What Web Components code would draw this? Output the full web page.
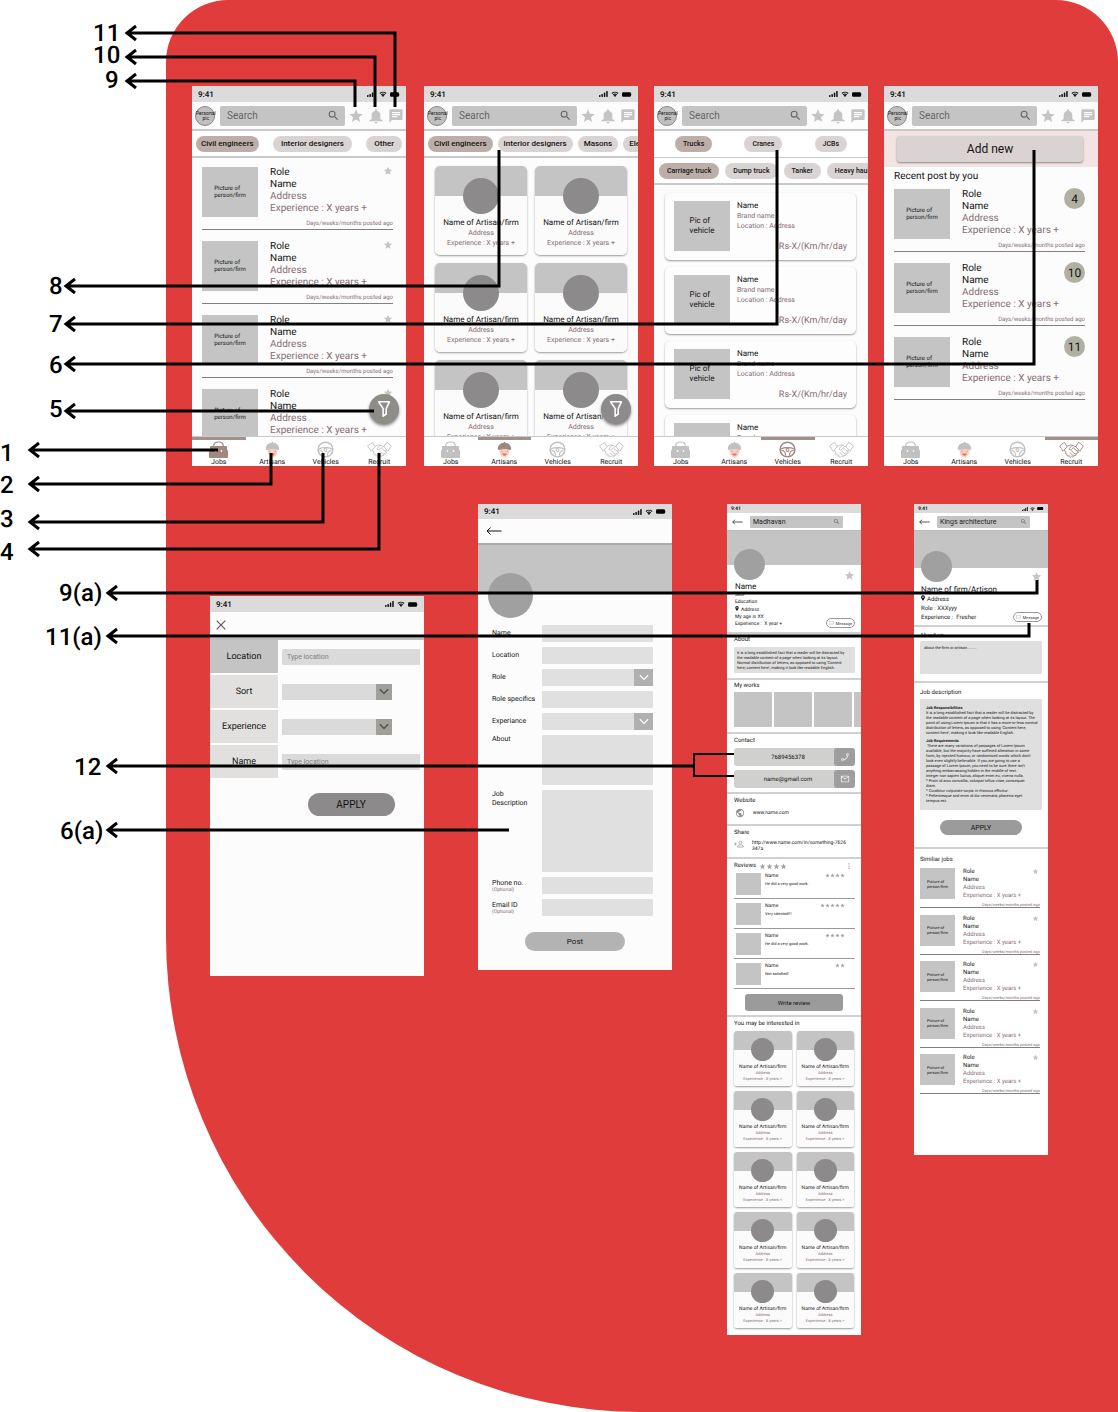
<!DOCTYPE html>
<html lang="en">
<head>
<meta charset="utf-8">
<meta name="viewport" content="width=device-width, initial-scale=1">
<title>Wireframe board</title>
<style>
  body { margin: 0; background: #fff; color: #141414; font-family: Roboto, "Liberation Sans", sans-serif; text-rendering: geometricPrecision; }
</style>
</head>
<body>
<wire-board>
  <jobs-screen style="--x:192px;--y:86px"></jobs-screen>
  <artisans-screen style="--x:424px;--y:86px"></artisans-screen>
  <vehicles-screen style="--x:654px;--y:86px"></vehicles-screen>
  <recruit-screen style="--x:884px;--y:86px"></recruit-screen>
  <filter-screen style="--x:210px;--y:596px"></filter-screen>
  <post-screen style="--x:478px;--y:504px"></post-screen>
  <artisan-profile style="--x:727px;--y:504px"></artisan-profile>
  <firm-profile style="--x:914px;--y:504px"></firm-profile>
</wire-board>

<script>
const base = `
  *,*::before,*::after{box-sizing:border-box}
  h1,h2,h3,p,ul,li,figure{margin:0;padding:0;font:inherit;list-style:none}
  button,input,select,textarea{font:inherit;color:inherit;border:0;margin:0;padding:0;border-radius:0;background:none;appearance:none;outline:0;min-width:0}
  a{color:inherit;text-decoration:none}
  [hidden]{display:none}
`;
function define(name, css, render) {
  customElements.define(name, class extends HTMLElement {
    constructor() { super(); this.attachShadow({ mode: 'open' }); }
    connectedCallback() {
      this.shadowRoot.innerHTML = `<style>${base}${css}</style>${render(this)}`;
    }
  });
}
const repeat = (n, html) => Array.from({ length: n }, () => html).join('');

const icons = {
  star: ['0 0 24 24', '<path fill="currentColor" d="M12 17.27 18.18 21l-1.64-7.03L22 9.24l-7.19-.61L12 2 9.19 8.63 2 9.24l5.46 4.73L5.82 21z"/>'],
  bell: ['0 0 24 24', '<path fill="currentColor" d="M12 23c1.2 0 2.2-.9 2.2-2.1H9.8c0 1.200 1 2.100 2.200 2.100zM18.500 16.500V11c0-3.400-1.800-5.900-4.900-6.600V3.600C13.600 2.700 12.900 2 12 2s-1.600.7-1.600 1.600v.8C7.300 5.100 5.500 7.600 5.500 11v5.500L2 18.500v1.500h20v-1.500z"/>'],
  chat: ['0 0 24 24', '<path fill="currentColor" d="M20 2H4c-1.100 0-2 .9-2 2v18l4-4h14c1.100 0 2-.9 2-2V4c0-1.100-.9-2-2-2zM6 9h12v2H6V9zm8 5H6v-2h8v2zm4-6H6V6h12v2z"/>'],
  search: ['0 0 24 24', '<path fill="currentColor" d="M15.500 14h-.79l-.28-.27A6.470 6.470 0 0 0 16 9.500 6.500 6.500 0 1 0 9.500 16c1.610 0 3.090-.59 4.230-1.570l.27.28v.79l5 4.990L20.490 19l-4.990-5zm-6 0a4.500 4.500 0 1 1 0-9 4.500 4.500 0 0 1 0 9z"/>'],
  signal: ['0 0 9 6', '<g fill="#111"><rect x="0" y="4" width="1.500" height="2" rx=".4"/><rect x="2.400" y="3" width="1.500" height="3" rx=".4"/><rect x="4.800" y="1.600" width="1.500" height="4.400" rx=".4"/><rect x="7.200" y="0" width="1.500" height="6" rx=".4"/></g>'],
  wifi: ['0 0 24 18', '<path fill="#111" d="M12 18l4-4.600a5.600 5.600 0 0 0-8 0zM5.500 10.600l2 2.200a6.500 6.500 0 0 1 9 0l2-2.200a9.400 9.400 0 0 0-13 0zM1.500 6.200l2.300 2.500a12 12 0 0 1 16.400 0l2.300-2.500a15.300 15.300 0 0 0-21 0z"/>'],
  battery: ['0 0 20 9', '<rect width="18" height="9" rx="2.500" fill="#050505"/><rect x="18.600" y="3" width="1.400" height="3" rx=".7" fill="#777"/>'],
  back: ['0 0 16 8', '<path d="M15.500 4H1M4.500.6 1 4l3.500 3.400" fill="none" stroke="#111" stroke-width="1"/>'],
  close: ['0 0 10 10', '<path d="M.7.7l8.600 8.600M9.300.7.7 9.300" fill="none" stroke="#555" stroke-width="1.100"/>'],
  chevron: ['0 0 12 8', '<path d="M1 1.300l5 5 5-5" fill="none" stroke="currentColor" stroke-width="1.300"/>'],
  funnel: ['0 0 16 20', '<path d="M1.800 1.800h12.400L10.500 9.500v6.200L7 18.200V9.500z" fill="none" stroke="#fff" stroke-width="1.800" stroke-linejoin="round"/>'],
  pin: ['0 0 10 14', '<path fill="#111" fill-rule="evenodd" d="M5 0a4.800 4.800 0 0 0-4.800 4.900C.2 8.500 5 14 5 14s4.800-5.500 4.800-9.100A4.800 4.800 0 0 0 5 0zm0 6.700a1.800 1.800 0 1 1 0-3.600 1.800 1.800 0 0 1 0 3.600z"/>'],
  note: ['0 0 14 12', '<path d="M1 1h12v8.500H4L1 11.500z" fill="none" stroke="#999" stroke-width="1.100"/>'],
  phone: ['0 0 24 24', '<path transform="matrix(-1 0 0 1 24 0)" fill="currentColor" d="M20 15.400c-1.200 0-2.400-.2-3.500-.6-.4-.1-.8 0-1 .3l-2.200 2.200a15.100 15.100 0 0 1-6.600-6.600l2.200-2.200c.3-.3.4-.7.2-1-.3-1.100-.5-2.300-.5-3.500 0-.5-.5-1-1-1H4c-.5 0-1 .5-1 1a17 17 0 0 0 17 17c.6 0 1-.5 1-1v-3.600c0-.5-.4-1-1-1zM5 5h1.600l.6 2.600L6 8.800A14 14 0 0 1 5 5zm14 14a14 14 0 0 1-3.800-1l1.200-1.200 2.600.6z"/>'],
  mail: ['0 0 24 24', '<path fill="currentColor" d="M20 4H4c-1.100 0-2 .9-2 2v12c0 1.100.9 2 2 2h16c1.100 0 2-.9 2-2V6c0-1.100-.9-2-2-2zm0 14H4V8l8 5 8-5v10zm-8-7L4 6h16l-8 5z"/>'],
  globe: ['0 0 24 24', '<path fill="#8f8f8f" d="M12 2a10 10 0 1 0 0 20 10 10 0 0 0 0-20zm-1 17.930A8 8 0 0 1 4.210 10.210L9 15v1c0 1.100.9 2 2 2v1.930zm6.900-2.540c-.26-.81-1-1.390-1.900-1.390h-1v-3c0-.55-.45-1-1-1H8v-2h2c.55 0 1-.45 1-1V7h2c1.100 0 2-.9 2-2v-.41a8 8 0 0 1 2.900 12.800z"/>'],
  invite: ['0 0 28 20', '<g fill="none" stroke="#8c8c8c" stroke-width="1.800"><path d="M0 10h8M4 6v8"/><circle cx="18" cy="6" r="4"/><path d="M10 18.500v-2.500c0-2 4-3.500 8-3.500s8 1.500 8 3.500v2.500z"/></g>'],
  dots: ['0 0 4 14', '<g fill="#a06070"><circle cx="2" cy="2" r="1.300"/><circle cx="2" cy="7" r="1.300"/><circle cx="2" cy="12" r="1.300"/></g>'],
  bag: ['0 0 40 34', '<path d="M10 12C10 4 14 2 20 2s10 2 10 10" fill="none" stroke="currentColor" stroke-width="2.200"/><path fill="currentColor" d="M5 10h30q2 0 2 2v6l2 1v13q0 2-2 2H3q-2 0-2-2V19l2-1v-6q0-2 2-2z"/><path d="M14 18v4M26 18v4" stroke="#f5f5f5" stroke-width="2.600"/>'],
  artisan: ['0 0 34 38', '<path fill="#fbd0c4" d="M6 15h22v8c0 8-6 14-11 14S6 31 6 23z"/><path fill="currentColor" d="M2 19C2 9 8 5 15 4l2-3 2 3c7 1 13 5 13 15l-3 1c-8-3-16-3-24 0z"/><path d="M11 22v2M23 22v2" stroke="#7b6b66" stroke-width="1.500"/><path fill="#ef6b60" d="M12 28h10c0 3-2 5-5 5s-5-2-5-5z"/>'],
  wheel: ['0 0 36 36', '<g fill="none" stroke="currentColor"><circle cx="18" cy="18" r="15.600" stroke-width="3.200"/><path stroke-width="2.200" d="M4 17c7-4 21-4 28 0M5 20c6 0 9 3 9 11M31 20c-6 0-9 3-9 11"/><circle cx="18" cy="19" r="3" stroke-width="2.200"/></g>'],
  shake: ['0 0 52 34', '<g fill="none" stroke="currentColor" stroke-width="1.900" stroke-linejoin="round" stroke-linecap="round"><path d="M2 9 11 2l6 9-8 9zM50 9l-9-7-6 9 8 9z"/><path d="M17 10c3 0 6-3 10-2l8 3M11 19l4 3c-4 3-1 6 2 4-2 4 2 6 4 3-1 4 3 5 5 2 3 3 6 1 5-2 4 2 6-1 4-4 4 1 6-2 3-5l3-2M28 9c-4 2-6 4-7 8 4 2 7-1 8-4l12 10M26 20l8 7M23 24l7 6"/></g>']
};
define('ui-icon', `:host{display:inline-block;flex:none;line-height:0}svg{display:block;width:100%;height:100%}`, el => {
  const [box, body] = icons[el.getAttribute('name')];
  return `<svg viewBox="${box}" aria-hidden="true">${body}</svg>`;
});

define('status-bar', `
  :host{display:flex;align-items:center;justify-content:space-between;height:16px;padding:0 6px;background:#dcdadb;font-size:8px;font-weight:600;flex:none}
  div{display:flex;align-items:center;gap:3px}
  .s{width:9px;height:6px}.w{width:8px;height:6px}.b{width:10px;height:5px}
  :host([size=s]){height:9px;padding:0 4px;font-size:5px}
  :host([size=s]) div{gap:2px}
  :host([size=s]) .s{width:6px;height:4px}:host([size=s]) .w{width:5px;height:4px}:host([size=s]) .b{width:7px;height:3px}
`, el => `<span>9:41</span>${el.hasAttribute('bare') ? '' : '<div><ui-icon class="s" name="signal"></ui-icon><ui-icon class="w" name="wifi"></ui-icon><ui-icon class="b" name="battery"></ui-icon></div>'}`);

define('app-header', `
  :host{display:flex;align-items:center;height:29px;padding:0 2px 0 3px;background:#fcfcfc;border-bottom:2px solid #c9c9c9;flex:none}
  .me{display:grid;place-items:center;width:20px;height:20px;border-radius:50%;background:#c0c0c0;border:1px solid #888;font-size:5px;line-height:5px;text-align:center;white-space:nowrap;flex:none}
  .me span{display:block}
  label{display:flex;align-items:center;flex:1;height:20px;margin:0 3px 0 5px;border-radius:2px;background:#c4c4c4;padding:0 5px 0 7px;color:#666;font-size:10px;min-width:0}
  input{flex:1}
  input::placeholder{color:#666;opacity:1}
  label ui-icon{width:13px;height:13px}
  nav{display:flex;gap:4px;color:#c4c4c4}
  nav ui-icon{display:block;width:16px;height:16px}
`, () => `<button class="me"><span>Personal<br>pic</span></button>
  <label><input type="text" placeholder="Search" aria-label="Search"><ui-icon name="search"></ui-icon></label>
  <nav><a href="#saved" aria-label="Saved"><ui-icon name="star"></ui-icon></a><a href="#alerts" aria-label="Alerts"><ui-icon name="bell"></ui-icon></a><a href="#chat" aria-label="Chat"><ui-icon name="chat"></ui-icon></a></nav>`);

define('chip-row', `
  :host{display:flex;align-items:center;gap:5px;height:27px;padding:0 4px;background:#fff;border-bottom:2px solid #c9c9c9;overflow:hidden;flex:none;font-size:8px}
  :host([spread]){justify-content:space-between}
  :host([around]){justify-content:space-between;padding:0 21px;border-bottom-width:1px}
  button{height:16px;border-radius:8px;padding:0 var(--chip-pad,6px);background:#d9d3d3;font-weight:500;white-space:nowrap;flex:none}
  button:first-of-type{background:#beaea9;padding:0 var(--first-pad,6px)}
`, el => el.getAttribute('items').split(',').map(t => `<button>${t}</button>`).join(''));

define('bottom-nav', `
  :host{display:block;flex:none;height:30px;background:#fff;border-top:1px solid #c9c9c9}
  nav{display:grid;grid-template-columns:repeat(4,1fr);height:100%}
  a{display:flex;flex-direction:column;align-items:center;justify-content:space-between;padding-top:1px;border-top:3px solid transparent;font-size:7px;line-height:8px}
  ui-icon{width:25px;height:17px;color:#c0c0c0}
  a[aria-current]{border-top-color:#a2908a}
  a[aria-current] ui-icon{color:#a08880}
`, el => `<nav>${[['Jobs', 'bag'], ['Artisans', 'artisan'], ['Vehicles', 'wheel'], ['Recruit', 'shake']].map(([t, i]) =>
  `<a href="#${t}" ${el.getAttribute('current') === t ? 'aria-current="page"' : ''}><ui-icon name="${i}"></ui-icon><span>${t}</span></a>`).join('')}</nav>`);

define('job-item', `
  :host{display:grid;grid-template-columns:56px minmax(0,1fr) auto;column-gap:12px;align-content:start;border-bottom:1px solid #808080;height:64px;white-space:nowrap}
  .pic{display:grid;place-items:center;height:50px;margin-top:1px;background:#c4c4c4;font-size:6px;line-height:7px}
  .text{font-size:10px;line-height:12px;padding-top:1px}
  .soft,.when{color:#876c74}
  .when{grid-column:1/-1;text-align:right;font-size:6px;line-height:8px;padding-top:3px}
  .star{width:10px;height:10px;color:#c4c4c4}
  .count{display:grid;place-items:center;width:21px;height:21px;border-radius:50%;background:#b1b1a3;font-size:12px}
  :host([size=s]){grid-template-columns:35px minmax(0,1fr) auto;column-gap:8px;height:40px}
  :host([size=s]) .pic{height:31px;margin-top:0;font-size:4px;line-height:5px}
  :host([size=s]) .text{font-size:6px;line-height:8px;height:31px;padding-top:0}
  :host([size=s]) .when{font-size:4px;line-height:5px}
  :host([size=s]) .star{width:7px;height:7px;margin-right:1px}
`, el => `<div class="pic"><span>Picture of<br>person/firm</span></div>
  <div class="text"><p>Role</p><p>Name</p><p class="soft">Address</p><p class="soft">Experience : X years +</p></div>
  ${el.hasAttribute('count') ? `<span class="count">${el.getAttribute('count')}</span>` : '<ui-icon class="star" name="star"></ui-icon>'}
  <p class="when">Days/weeks/months posted ago</p>`);

define('artisan-card', `
  :host{display:block;height:89px;border-radius:5px;background:linear-gradient(#c4c4c4 30px,#fbfbfb 30px);box-shadow:0 1px 2px #999;text-align:center;padding-top:12px;white-space:nowrap;font-size:7px;line-height:10px;color:#876c74}
  .face{width:36px;height:36px;border-radius:50%;background:#8c8a8a;margin:0 auto 4px}
  h3{font-size:8px;color:#141414}
  :host([size=s]){height:auto;border-radius:3px;background:linear-gradient(#c4c4c4 19px,#fbfbfb 19px);padding-top:7px;font-size:4px;line-height:6px}
  :host([size=s]) .face{width:23px;height:23px;margin-bottom:3px}
  :host([size=s]) h3{font-size:5px}
`, () => `<div class="face"></div><h3>Name of Artisan/firm</h3><p>Address</p><p>Experience : X years +</p>`);

define('vehicle-card', `
  :host{display:grid;grid-template-columns:56px 1fr;column-gap:7px;height:67px;padding:8px 9px;border-radius:5px;background:#fdfdfd;box-shadow:0 1px 2px #999;white-space:nowrap;color:#876c74;font-size:7px;line-height:10px}
  .pic{display:grid;place-items:center;height:50px;background:#c4c4c4;color:#141414;font-size:8px}
  .info{display:flex;flex-direction:column}
  h3{font-size:8px;color:#141414}
  .price{margin-top:auto;text-align:right;font-size:9px}
`, () => `<div class="pic"><span>Pic of<br>vehicle</span></div><div class="info"><h3>Name</h3><p>Brand name</p><p>Location : Address</p><p class="price">Rs-X/(Km/hr/day</p></div>`);

define('filter-fab', `
  :host{position:absolute;right:7px;bottom:42px}
  button{display:grid;place-items:center;width:30px;height:30px;border-radius:50%;background:var(--fab,#8c8a8a);box-shadow:0 2px 3px #888}
  ui-icon{width:14px;height:18px}
`, () => `<button aria-label="Filter"><ui-icon name="funnel"></ui-icon></button>`);

const screen = `:host{display:flex;flex-direction:column;background:#fcfcfc;width:214px;height:380px;overflow:hidden}main{flex:1;overflow:hidden;min-height:0}`;

define('jobs-screen', `${screen} main{display:grid;align-content:start;gap:10px;padding:8px 13px 0 10px} chip-row{--chip-pad:8px;--first-pad:5px}`+` filter-fab{--fab:#8e8d86}`,
  () => `<status-bar></status-bar><app-header></app-header><chip-row spread items="Civil engineers,Interior designers,Other"></chip-row>
  <main>${repeat(4, '<job-item></job-item>')}</main><filter-fab></filter-fab><bottom-nav current="Jobs"></bottom-nav>`);

define('artisans-screen', `${screen} main{display:grid;grid-template-columns:1fr 1fr;align-content:start;gap:8px;padding:8px 11px 0}`,
  () => `<status-bar></status-bar><app-header></app-header><chip-row items="Civil engineers,Interior designers,Masons,Electricians"></chip-row>
  <main>${repeat(6, '<artisan-card></artisan-card>')}</main><filter-fab></filter-fab><bottom-nav current="Artisans"></bottom-nav>`);

define('vehicles-screen', `${screen} main{display:grid;align-content:start;gap:7px;padding:8px 12px 0 11px} chip-row{--chip-pad:8px;--first-pad:8px;font-size:7px;gap:6px;padding-left:5px} chip-row[around]{padding:0 21px}`,
  () => `<status-bar></status-bar><app-header></app-header><chip-row around items="Trucks,Cranes,JCBs"></chip-row><chip-row items="Carriage truck,Dump truck,Tanker,Heavy haulers"></chip-row>
  <main>${repeat(4, '<vehicle-card></vehicle-card>')}</main><bottom-nav current="Vehicles"></bottom-nav>`);

define('recruit-screen', `${screen} .add{flex:none;height:36px;padding:5px 15px 5px 13px;background:#f3e3e3}
  .add button{width:100%;height:26px;border-radius:3px;background:#d9d3d3;box-shadow:0 1px 2px #888;font-size:12px}
  main{padding:4px 13px 0 10px} h2{font-size:10px;line-height:12px;padding-bottom:5px} .list{display:grid;gap:10px}`,
  () => `<status-bar></status-bar><app-header></app-header><div class="add"><button>Add new</button></div>
  <main><h2>Recent post by you</h2><div class="list"><job-item count="4"></job-item><job-item count="10"></job-item><job-item count="11"></job-item></div></main><bottom-nav current="Recruit"></bottom-nav>`);

const field = `.pick{display:flex}.pick select{flex:1}.pick span{display:grid;place-items:center;flex:none}.pick ui-icon{width:10px;height:7px}`;
const pick = id => `<div class="pick"><select id="${id}"><option></option></select><span><ui-icon name="chevron"></ui-icon></span></div>`;

define('filter-screen', `${screen} ${field}
  header{display:flex;align-items:center;height:28px;padding:0 6px;border-bottom:2px solid #c0bdc0;flex:none} header ui-icon{display:block;width:10px;height:10px}
  form{display:grid;grid-template-columns:68px 1fr;grid-auto-rows:33px;gap:2px 4px;padding-right:4px}
  label{display:grid;place-items:center;background:#e1e0de;font-size:9px} label:first-of-type{background:#c4c4c4}
  input,.pick{align-self:center;height:16px;background:#dadada;border-radius:1px;font-size:7px}
  input{padding:0 5px;width:100%} input::placeholder{color:#808080;opacity:1}
  .pick{width:110px}.pick span{width:16px;background:#a09f99;color:#444}
  .apply{grid-column:2;justify-self:center;align-self:start;margin:13px 0 0;width:87px;height:23px;border-radius:12px;background:#8c8a8a;font-size:10px}`,
  () => `<status-bar></status-bar><header><button aria-label="Close"><ui-icon name="close"></ui-icon></button></header>
  <form><label for="loc">Location</label><input id="loc" placeholder="Type location"><label for="sort">Sort</label>${pick('sort')}
  <label for="exp">Experience</label>${pick('exp')}<label for="name">Name</label><input id="name" placeholder="Type location"><button class="apply" type="button">APPLY</button></form>`);

define('post-screen', `${screen} :host{width:194px;height:466px} ${field}
  status-bar{height:15px}
  header{display:flex;align-items:center;height:26px;padding:0 8px;border-bottom:2px solid #aaa;flex:none} header ui-icon{display:block;width:16px;height:8px}
  .banner{height:49px;background:#c4c4c4;flex:none}
  .face{width:45px;height:45px;border-radius:50%;background:#a0a0a0;margin:-21px 0 7px 10px;flex:none}
  form{display:grid;grid-template-columns:45px 1fr;grid-template-rows:repeat(5,17px) 50px 82px 17px 17px;gap:5px;padding:0 19px 0 14px;font-size:7px}
  form{margin-bottom:16px}
  label{align-self:center;line-height:9px;white-space:nowrap}
  label.top{align-self:start} small{display:block;font-size:5px;line-height:5px;color:#876c74}
  input,textarea,.pick{background:#e0e0e0;border-radius:1px;width:100%;height:100%;resize:none}
  .pick span{width:19px;background:#b0b0b0;color:#fff}
  .post{align-self:center;width:100px;height:19px;border-radius:10px;background:#b3b3b3;font-size:8px;flex:none}`,
  () => `<status-bar></status-bar><header><button aria-label="Back"><ui-icon name="back"></ui-icon></button></header><div class="banner"></div><div class="face"></div>
  <form><label for="n">Name</label><input id="n"><label for="l">Location</label><input id="l"><label for="r">Role</label>${pick('r')}
  <label for="s">Role specifics</label><input id="s"><label for="e">Experiance</label>${pick('e')}
  <label class="top" for="a">About</label><textarea id="a"></textarea><label class="top" for="j">Job<br>Description</label><textarea id="j"></textarea>
  <label for="p">Phone no.<small>(Optional)</small></label><input id="p"><label for="m">Email ID<small>(Optional)</small></label><input id="m"></form>
  <button class="post">Post</button>`);

const profile = `${screen} :host{width:134px}
  header{display:flex;align-items:center;gap:7px;height:18px;padding:0 18px 0 5px;border-bottom:1px solid #bbb;flex:none}
  header button,header button ui-icon{display:block;width:11px;height:6px}
  header label{display:flex;align-items:center;flex:1;height:12px;padding:0 3px;border-radius:1px;background:#c4c4c4;font-size:7px;color:#222}
  header input{flex:1;width:100%} header label ui-icon{width:7px;height:7px;color:#666}
  .banner{height:34px;background:#c4c4c4;flex:none}
  .who{display:flex;justify-content:space-between;padding:0 6px 4px 8px;font-size:5px;line-height:7px;white-space:nowrap;flex:none}
  .face{width:31px;height:31px;border-radius:50%;background:#a0a0a0;margin:-16px 0 2px -1px}
  h1{font-size:8px;line-height:10px}
  .who ui-icon[name=pin]{width:4px;height:5px;margin-right:2px}
  .side{display:flex;flex-direction:column;align-items:flex-end;justify-content:space-between;padding-top:5px}
  .side>ui-icon{width:11px;height:11px;color:#c4c4c4}
  .msg{display:flex;align-items:center;justify-content:center;gap:2px;width:29px;height:10px;border:1px solid #999;border-radius:5px;font-size:4px;line-height:5px;color:#333}
  .msg ui-icon{width:5px;height:4px}
  section{border-top:2px solid #d0d0d0;padding:3px 6px 5px 7px;flex:none}
  h2{font-size:6px;line-height:8px}
  .box{background:#dfdfdf;border-radius:1px;font-size:4px;line-height:5px;white-space:pre}`;
const who = (lines, name) => `<div class="banner"></div><div class="who"><div><div class="face"></div><h1>${name}</h1>${lines}</div>
  <div class="side"><ui-icon name="star"></ui-icon><button class="msg"><ui-icon name="note"></ui-icon>Message</button></div></div>`;
const top_ = (bare, value) => `<status-bar size="s" ${bare}></status-bar><header><button aria-label="Back"><ui-icon name="back"></ui-icon></button><label><input value="${value}" aria-label="Search"><ui-icon name="search"></ui-icon></label></header>`;
const stars = n => repeat(n, '<ui-icon name="star"></ui-icon>');

define('artisan-profile', `${profile} :host{height:831px;background:#fff}
  .about .box{margin-top:3px;padding:3px 3px;height:26px}
  .about,.works{padding-top:2px}
  .works{padding-right:0}
  .works div{display:flex;gap:2px;margin-top:2px;overflow:hidden}.works i{flex:none;width:38px;height:35px;background:#c4c4c4}
  .contact{padding-bottom:4px}
  .contact a{display:flex;height:18px;margin-top:3px;border-radius:3px;background:#d0d0ce;font-size:6px;overflow:hidden}
  .contact a+a{margin-top:4px}
  .contact span{flex:1;display:grid;place-items:center;padding-left:8px}
  .contact b{display:grid;place-items:center;width:21px;background:#9e9e9e;border-radius:3px;color:#eee}.contact b ui-icon{width:10px;height:10px}
  .line{display:flex;gap:8px;font-size:5px;line-height:6px}
  .site .line{margin-top:3px;align-items:center;padding-left:1px}.site ui-icon{width:10px;height:10px}.site{padding-bottom:6px}
  .share .line{margin-top:3px}.share ui-icon{width:10px;height:8px}
  .rev{padding-bottom:4px}
  .head{display:flex;align-items:center;gap:3px}
  .stars{display:flex;color:#a5a5a5}.stars ui-icon{width:5px;height:5px}.head .stars ui-icon{width:7px;height:7px}
  .head>ui-icon{width:2px;height:6px;margin-left:auto;margin-right:4px}
  .rev ul{display:grid;gap:4px;margin-top:3px}
  .rev li{display:grid;grid-template-columns:25px 1fr auto;column-gap:4px;height:26px;padding:0 10px 0 2px;border-bottom:1px solid #999;font-size:4px;line-height:7px;white-space:nowrap}
  .rev li i{height:22px;background:#c4c4c4}.rev h3{font-size:5px;line-height:7px}
  .write{display:block;width:98px;height:17px;margin:5px auto 0;border-radius:3px;background:#9b9b9b;font-size:6px}
  .rev{padding-right:7px}.rev ul{margin-right:-1px}
  .more{flex:1;display:flex;flex-direction:column;padding-bottom:7px;padding-right:7px}
  .grid{flex:1;display:grid;grid-template-columns:1fr 1fr;grid-auto-rows:1fr;gap:5px;margin-top:3px}`,
  () => `${top_('bare', 'Madhavan')}${who('<p>Skill</p><p>Education</p><p><ui-icon name="pin"></ui-icon>Address</p><p>My age is XX</p><p>Experience : &nbsp;X year +</p>', 'Name')}
  <section class="about"><h2>About</h2><p class="box">It is a long established fact that a reader will be distracted by
the readable content of a page when looking at its layout.
Normal distribution of letters, as opposed to using 'Content
here, content here', making it look like readable English.</p></section>
  <section class="works"><h2>My works</h2><div><i></i><i></i><i></i><i></i></div></section>
  <section class="contact"><h2>Contact</h2><a href="tel:7689456378"><span>7689456378</span><b><ui-icon name="phone"></ui-icon></b></a><a href="mailto:name@gmail.com"><span>name@gmail.com</span><b><ui-icon name="mail"></ui-icon></b></a></section>
  <section class="site"><h2>Website</h2><p class="line"><ui-icon name="globe"></ui-icon><a href="#site">www.name.com</a></p></section>
  <section class="share"><h2>Share</h2><p class="line"><ui-icon name="invite"></ui-icon><a href="#share">http://www.name.com/in/something-7626<br>347a</a></p></section>
  <section class="rev"><div class="head"><h2>Reviews</h2><span class="stars">${stars(4)}</span><ui-icon name="dots"></ui-icon></div>
  <ul>${[['He did a very good work.', 4], ['Very talented!!!', 5], ['He did a very good work.', 4], ['Not satisfied!', 2]].map(([t, n]) => `<li><i></i><div><h3>Name</h3><p>${t}</p></div><span class="stars">${stars(n)}</span></li>`).join('')}</ul>
  <button class="write">Write review</button></section>
  <section class="more"><h2>You may be interested in</h2><div class="grid">${repeat(10, '<artisan-card size="s"></artisan-card>')}</div></section>`);

define('firm-profile', `${profile} :host{height:651px;background:#fff}
  .banner{height:37px} .face{margin:-17px 0 3px 0}
  .who{font-size:6px;line-height:9px;padding:0 6px 3px 7px} .side{padding-top:3px}
  .who ui-icon[name=pin]{width:4px;height:6px}
  section{padding-left:6px}
  .about{padding-top:5px;padding-bottom:7px}.about .box{height:33px;margin-top:1px;padding:4px}
  .job{padding-top:6px;padding-bottom:12px}.job .box{min-height:111px;margin-top:2px;padding:6px 6px 3px}
  .box b{font-weight:700}.box p+p{margin-top:3px}
  .apply{display:block;width:82px;height:15px;margin:10px auto 0;border-radius:8px;background:#9b9b9b;font-size:7px}
  .similar{padding-top:7px;padding-right:8px}
  .similar div{display:grid;align-content:space-between;height:226px;margin-top:4px}`,
  () => `${top_('', 'Kings architecture')}${who('<p><ui-icon name="pin"></ui-icon>Address</p><p>Role : XXXyyy</p><p>Experience : &nbsp;Fresher</p>', 'Name of firm/Artison')}
  <section class="about"><h2>About us</h2><p class="box">about the firm or artison.........</p></section>
  <section class="job"><h2>Job description</h2><div class="box"><p><b>Job Responsibilities</b>
It is a long established fact that a reader will be distracted by
the readable content of a page when looking at its layout. The
point of using Lorem Ipsum is that it has a more-or-less normal
distribution of letters, as opposed to using 'Content here,
content here', making it look like readable English.</p><p><b>Job Requirements</b>
 There are many variations of passages of Lorem Ipsum
available, but the majority have suffered alteration in some
form, by injected humour, or randomised words which don't
look even slightly believable. If you are going to use a
passage of Lorem Ipsum, you need to be sure there isn't
anything embarrassing hidden in the middle of text.
Integer non sapien luctus, aliquet enim eu, viverra nulla.
* Proin id arcu convallis, volutpat tellus vitae, consequat
diam.
* Curabitur vulputate turpis in rhoncus efficitur.
* Pellentesque sed enim id dui venenatis pharetra eget
tempus est.</p></div><button class="apply">APPLY</button></section>
  <section class="similar"><h2>Similiar jobs</h2><div>${repeat(5, '<job-item size="s"></job-item>')}</div></section>`);

/* Numbered callouts: label, label x, label y, arrow tip x, line y, line end x, optional vertical end y */
const callouts = [
  ['11', 93, 33, 127, 33, 395, 107], ['10', 93, 55, 127, 57, 375, 107], ['9', 105, 80, 127, 81, 355, 107],
  ['8', 49, 286, 66, 286, 499, 150], ['7', 49, 324, 66, 324, 777, 150], ['6', 49, 365, 66, 364, 1034, 150], ['5', 49, 409, 66, 411, 374],
  ['1', 0, 453, 30, 450, 218], ['2', 0, 485, 30, 484, 271, 453], ['3', 0, 519, 30, 522, 323, 453], ['4', 0, 552, 30, 549, 379, 453],
  ['9(a)', 59, 593, 108, 593, 1037, 580], ['11(a)', 45, 637, 108, 636, 1029, 623], ['12', 74, 767, 108, 766, 694], ['6(a)', 60, 831, 108, 830, 509]
];
define('callout-layer', `
  :host{position:absolute;inset:0;pointer-events:none}
  svg{position:absolute;inset:0;width:100%;height:100%;overflow:visible}
  span{position:absolute;left:var(--x);top:var(--y);transform:translateY(-50%);font-size:24px;line-height:22px;font-weight:500;color:#000}
`, () => `<svg aria-hidden="true"><g fill="none" stroke="#000" stroke-width="3">${callouts.map(([, , , tip, y, end, vy]) =>
  `<path d="M${tip} ${y}H${end}${vy ? `V${vy}` : ''}M${tip + 9} ${y - 7}L${tip} ${y}l9 7"/>`).join('')}<path stroke-width="2" d="M734 754H694V776H734"/></g></svg>
  ${callouts.map(([t, x, y]) => `<span style="--x:${x}px;--y:${y}px">${t}</span>`).join('')}`);

define('wire-board', `
  :host{display:block;position:relative;min-height:1412px;overflow:hidden}
  .back{position:absolute;inset:0 0 0 166px;background:#e03c3c;border-radius:62px 62px 0 475px}
  ::slotted(*){position:absolute;left:var(--x);top:var(--y)}
`, () => `<div class="back"></div><slot></slot><callout-layer></callout-layer>`);
</script>
</body>
</html>
